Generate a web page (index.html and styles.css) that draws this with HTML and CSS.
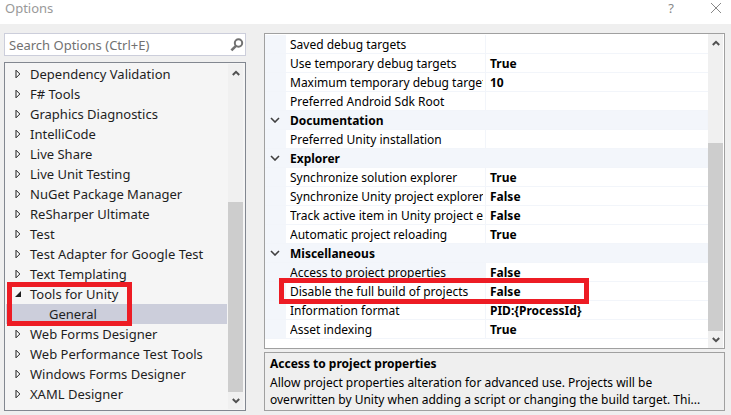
FILE: index.html
```html
<!DOCTYPE html>
<html lang="en">
<head>
<meta charset="utf-8">
<title>Options</title>
<link rel="stylesheet" href="styles.css">
</head>
<body>
<svg class="defs" aria-hidden="true">
  <symbol id="closed" viewBox="0 0 6 10"><path d="M1 1.2V8.8L4.8 5Z" fill="#fff" stroke="#1e1e1e"/></symbol>
  <symbol id="open" viewBox="0 0 6 10"><path d="M6 2V8H0Z" fill="#1e1e1e"/></symbol>
  <symbol id="up" viewBox="0 0 8 6"><path d="M.8 5 4 1.8 7.2 5" fill="none" stroke="#505050" stroke-width="2"/></symbol>
  <symbol id="down" viewBox="0 0 8 6"><path d="M.8 1 4 4.2 7.2 1" fill="none" stroke="#505050" stroke-width="2"/></symbol>
  <symbol id="chevron" viewBox="0 0 10 6"><path d="M1 1 5 5 9 1" fill="none" stroke="#404040" stroke-width="1.6"/></symbol>
</svg>
<header class="titlebar">
  <h1>Options</h1>
  <button class="caption" aria-label="Help">?</button>
  <button class="caption" aria-label="Close"><svg width="10" height="10" viewBox="0 0 10 10"><path d="M0 0 10 10M10 0 0 10" stroke="#888"/></svg></button>
</header>
<main class="dialog">
  <nav class="side">
    <form class="search">
      <input type="text" aria-label="Search Options" placeholder="Search Options (Ctrl+E)">
      <button type="button" aria-label="Search"><svg width="14" height="14" viewBox="0 0 14 14"><circle cx="8.5" cy="5" r="3.7" fill="none" stroke="#717171" stroke-width="2"/><path d="M6 7.8 1.4 12.4" stroke="#717171" stroke-width="2.6"/></svg></button>
    </form>
    <div class="tree-box">
      <ul class="tree">
        <li><button class="node"><svg><use href="#closed"/></svg>Dependency Validation</button></li>
        <li><button class="node"><svg><use href="#closed"/></svg>F# Tools</button></li>
        <li><button class="node"><svg><use href="#closed"/></svg>Graphics Diagnostics</button></li>
        <li><button class="node"><svg><use href="#closed"/></svg>IntelliCode</button></li>
        <li><button class="node"><svg><use href="#closed"/></svg>Live Share</button></li>
        <li><button class="node"><svg><use href="#closed"/></svg>Live Unit Testing</button></li>
        <li><button class="node"><svg><use href="#closed"/></svg>NuGet Package Manager</button></li>
        <li><button class="node"><svg><use href="#closed"/></svg>ReSharper Ultimate</button></li>
        <li><button class="node"><svg><use href="#closed"/></svg>Test</button></li>
        <li><button class="node"><svg><use href="#closed"/></svg>Test Adapter for Google Test</button></li>
        <li><button class="node"><svg><use href="#closed"/></svg>Text Templating</button></li>
        <li class="marked"><button class="node"><svg><use href="#open"/></svg>Tools for Unity</button>
          <ul>
            <li><button class="node child">General</button></li>
          </ul>
          <span class="mark mark-tree"></span>
        </li>
        <li><button class="node"><svg><use href="#closed"/></svg>Web Forms Designer</button></li>
        <li><button class="node"><svg><use href="#closed"/></svg>Web Performance Test Tools</button></li>
        <li><button class="node"><svg><use href="#closed"/></svg>Windows Forms Designer</button></li>
        <li><button class="node"><svg><use href="#closed"/></svg>XAML Designer</button></li>
      </ul>
      <div class="scroll">
        <button aria-label="Scroll up"><svg><use href="#up"/></svg></button>
        <div class="track"><div class="thumb thumb-tree"></div></div>
        <button aria-label="Scroll down"><svg><use href="#down"/></svg></button>
      </div>
    </div>
  </nav>
  <section class="content">
    <div class="grid-box">
      <div class="props">
      <table>
        <colgroup><col class="c-gutter"><col class="c-name"><col></colgroup>
        <tbody>
          <tr><td></td><th><div>Saved debug targets</div></th><td></td></tr>
          <tr><td></td><th><div>Use temporary debug targets</div></th><td>True</td></tr>
          <tr><td></td><th><div>Maximum temporary debug targets</div></th><td>10</td></tr>
          <tr><td></td><th><div>Preferred Android Sdk Root</div></th><td></td></tr>
          <tr class="cat"><td><button aria-label="Collapse Documentation"><svg><use href="#chevron"/></svg></button></td><th colspan="2">Documentation</th></tr>
          <tr><td></td><th><div>Preferred Unity installation</div></th><td></td></tr>
          <tr class="cat"><td><button aria-label="Collapse Explorer"><svg><use href="#chevron"/></svg></button></td><th colspan="2">Explorer</th></tr>
          <tr><td></td><th><div>Synchronize solution explorer</div></th><td>True</td></tr>
          <tr><td></td><th><div>Synchronize Unity project explorer</div></th><td>False</td></tr>
          <tr><td></td><th><div>Track active item in Unity project explorer</div></th><td>False</td></tr>
          <tr><td></td><th><div>Automatic project reloading</div></th><td>True</td></tr>
          <tr class="cat"><td><button aria-label="Collapse Miscellaneous"><svg><use href="#chevron"/></svg></button></td><th colspan="2">Miscellaneous</th></tr>
          <tr class="current"><td></td><th><div>Access to project properties</div></th><td>False</td></tr>
          <tr class="marked"><td><span class="mark mark-row"></span></td><th><div>Disable the full build of projects</div></th><td>False</td></tr>
          <tr><td></td><th><div>Information format</div></th><td>PID:{ProcessId}</td></tr>
          <tr><td></td><th><div>Asset indexing</div></th><td>True</td></tr>
        </tbody>
      </table>
      </div>
      <div class="scroll">
        <button aria-label="Scroll up"><svg><use href="#up"/></svg></button>
        <div class="track"><div class="thumb thumb-grid"></div></div>
        <button aria-label="Scroll down"><svg><use href="#down"/></svg></button>
      </div>
    </div>
    <div class="help">
      <h2>Access to project properties</h2>
      <p>Allow project properties alteration for advanced use. Projects will be overwritten by Unity when adding a script or changing the build target. Thi...</p>
    </div>
  </section>
</main>
</body>
</html>
```
FILE: styles.css
```css
* { box-sizing: border-box; }
body {
  margin: 0;
  min-height: 100vh;
  display: flex;
  flex-direction: column;
  background: #efefef;
  color: #1e1e1e;
  font: 13px/20px "Noto Sans", sans-serif;
}
button, input { font: inherit; color: inherit; border: 0; padding: 0; background: none; }
h1, h2, p, ul { margin: 0; padding: 0; font-size: inherit; }
ul { list-style: none; }
.defs { position: absolute; width: 0; height: 0; }

.titlebar { display: flex; align-items: center; height: 24px; padding: 0 5px 8px; background: #fff; color: #999; }
.titlebar h1 { flex: 1; font-weight: 400; line-height: 16px; }
.caption { width: 20px; height: 16px; line-height: 16px; margin-left: 25px; color: #888; display: grid; place-items: center; }

.dialog { flex: 1; display: flex; gap: 18px; padding: 9px 6px 4px 4px; }
.side { flex: 0 0 242px; display: flex; flex-direction: column; gap: 6px; }
.search { display: flex; align-items: center; height: 23px; border: 1px solid #cccedb; background: #fff; padding: 0 1px 0 4px; }
.search input { flex: 1; min-width: 0; outline: 0; }
.search input::placeholder { color: #717171; opacity: 1; }
.search svg { display: block; }

.tree-box { flex: 1; display: flex; border: 1px solid #828790; background: #f5f5f5; padding: 1px; }
.tree { flex: 1; margin-right: 1px; }
.node { display: flex; align-items: center; gap: 9px; width: 100%; height: 20px; line-height: 18px; padding: 0 0 1px 9px; text-align: left; white-space: nowrap; }
.node svg { width: 6px; height: 10px; }
.node.child { padding-left: 43px; background: #cccedb; }

.marked { position: relative; }
.mark { position: absolute; border: 5px solid #ed1c24; pointer-events: none; }
.mark-tree { left: 1px; top: -2px; width: 125px; height: 44px; }
.mark-row { left: 14px; top: -4px; width: 310px; height: 26px; }

.scroll { flex: 0 0 15px; display: flex; flex-direction: column; margin-right: 1px; background: #f0f0f0; }
.scroll button { height: 17px; display: grid; place-items: center; }
.scroll svg { width: 8px; height: 6px; }
.track { flex: 1; display: flex; align-items: flex-end; }
.thumb { width: 100%; background: #cdcdcd; }
.thumb-tree { height: 61%; }
.thumb-grid { height: 67%; }

.content { flex: 1; min-width: 0; display: flex; flex-direction: column; gap: 3px; font-size: 12px; }
.grid-box { flex: 1; display: flex; border: 1px solid #a0a0a0; background: #fff; }
.props { flex: 1; min-width: 0; padding-top: 1px; }
table { width: 100%; table-layout: fixed; border-collapse: separate; border-spacing: 0; color: #000; line-height: 16px; }
.c-gutter { width: 21px; }
.c-name { width: 200px; }
tr { height: 19px; }
th, td { height: 19px; padding: 2px 0 0 4px; text-align: left; white-space: nowrap; border-bottom: 1px solid #f2f5fa; }
th { font-weight: 400; border-right: 1px solid #f2f5fa; }
th div { overflow: hidden; margin-right: 2px; }
td { font-weight: 700; }
td:first-child { padding: 0; background: #f3f6fb; }
.cat th { font-weight: 700; background: #f3f6fb; }
.current th { background: #f3f6fb; }
td button { display: grid; place-items: center; width: 20px; height: 18px; }
td svg { width: 10px; height: 6px; }

.help { height: 59px; border: 1px solid #a0a0a0; padding: 1px 5px; color: #000; line-height: 17px; }
.help h2 { line-height: 20px; }
```
